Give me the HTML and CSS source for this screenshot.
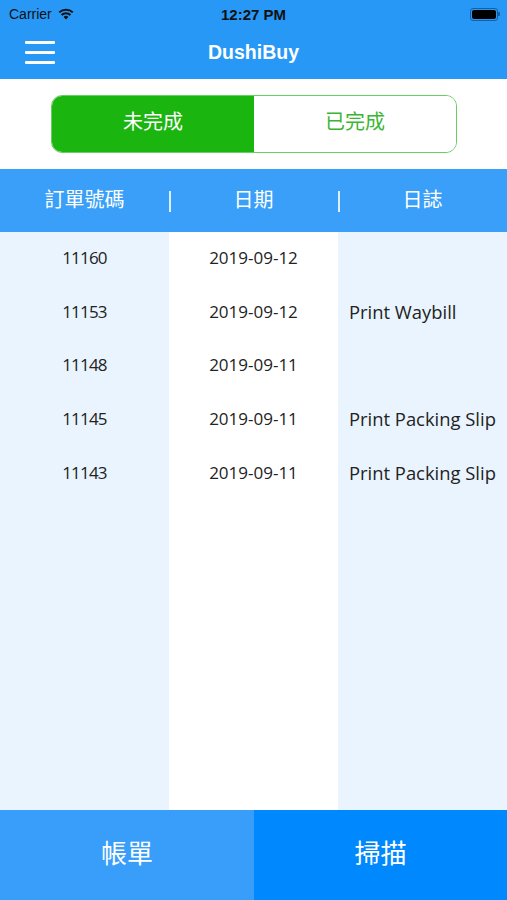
FILE: index.html
```html
<!DOCTYPE html>
<html lang="zh-Hant">
<head>
  <meta charset="UTF-8" />
  <meta name="viewport" content="width=device-width, initial-scale=1.0" />
  <title>DushiBuy</title>
  <link rel="stylesheet" href="styles.css">
</head>
<body>
  <div class="app">
    <div class="statusbar">
      <div class="carrier">Carrier
        <svg class="wifi" width="16" height="12" viewBox="0 0 16 12">
          <path d="M8 11.5 L5.6 8.9 A3.6 3.6 0 0 1 10.4 8.9 Z" fill="#111"/>
          <path d="M3.5 6.9 A6.6 6.6 0 0 1 12.5 6.9" stroke="#111" stroke-width="2" fill="none"/>
          <path d="M1.2 4.4 A9.8 9.8 0 0 1 14.8 4.4" stroke="#111" stroke-width="2" fill="none"/>
        </svg>
      </div>
      <div class="clock">12:27 PM</div>
      <div class="battery"><span></span></div>
    </div>

    <div class="navbar">
      <div class="menu"><i></i><i></i><i></i></div>
      <div class="title">DushiBuy</div>
    </div>

    <div class="segment-wrap">
      <div class="segment">
        <button class="active">未完成</button>
        <button>已完成</button>
      </div>
    </div>

    <div class="thead">
      <div>訂單號碼</div>
      <div>日期</div>
      <div>日誌</div>
    </div>

    <div class="tbody">
      <div class="col col-id">
        <div class="cell">11160</div>
        <div class="cell">11153</div>
        <div class="cell">11148</div>
        <div class="cell">11145</div>
        <div class="cell">11143</div>
      </div>
      <div class="col col-date">
        <div class="cell">2019-09-12</div>
        <div class="cell">2019-09-12</div>
        <div class="cell">2019-09-11</div>
        <div class="cell">2019-09-11</div>
        <div class="cell">2019-09-11</div>
      </div>
      <div class="col col-log">
        <div class="cell"></div>
        <div class="cell">Print Waybill</div>
        <div class="cell"></div>
        <div class="cell">Print Packing Slip</div>
        <div class="cell">Print Packing Slip</div>
      </div>
    </div>

    <div class="tabbar">
      <button class="bill">帳單</button>
      <button class="scan">掃描</button>
    </div>
  </div>
</body>
</html>
```

FILE: styles.css
```css
html, body {
  margin: 0;
  padding: 0;
}
body {
  font-family: "Noto Sans CJK TC", "Noto Sans", sans-serif;
  background: #fff;
}
.app {
  width: 507px;
  height: 900px;
  display: flex;
  flex-direction: column;
  overflow: hidden;
}
.statusbar {
  height: 28px;
  background: #2798f6;
  display: flex;
  align-items: center;
  justify-content: space-between;
  padding: 0 9px;
  font-family: "Liberation Sans", sans-serif;
  font-size: 14px;
  color: #111;
  position: relative;
}
.carrier {
  display: flex;
  align-items: center;
  gap: 6px;
}
.clock {
  position: absolute;
  left: 0;
  right: 0;
  text-align: center;
  font-weight: bold;
  font-size: 15px;
}
.battery {
  width: 24px;
  height: 9px;
  border: 1px solid #1a5f9c;
  border-radius: 3px;
  padding: 1px;
  position: relative;
}
.battery span {
  display: block;
  height: 100%;
  background: #000;
  border-radius: 2px;
}
.battery::after {
  content: "";
  position: absolute;
  right: -3px;
  top: 3px;
  width: 2px;
  height: 4px;
  background: #1a5f9c;
  border-radius: 0 1px 1px 0;
}
.navbar {
  height: 51px;
  background: #2798f6;
  display: flex;
  align-items: center;
  position: relative;
}
.menu {
  margin-left: 25px;
  display: flex;
  flex-direction: column;
  gap: 6.5px;
  margin-top: -2px;
}
.menu i {
  display: block;
  width: 30px;
  height: 3.5px;
  background: #fff;
  border-radius: 1px;
}
.title {
  position: absolute;
  left: 0;
  right: 0;
  top: 13px;
  text-align: center;
  color: #fff;
  font-family: "Liberation Sans", sans-serif;
  font-weight: bold;
  font-size: 19.5px;
}
.segment-wrap {
  height: 90px;
  display: flex;
  align-items: center;
  justify-content: center;
  background: #fff;
}
.segment {
  width: 404px;
  height: 56px;
  border: 1.5px solid #6bcc63;
  border-radius: 11px;
  display: flex;
  overflow: hidden;
  margin-left: 1px;
}
.segment button {
  flex: 1;
  border: none;
  background: #fff;
  color: #3cb534;
  font-family: inherit;
  font-size: 20px;
  padding: 0 0 7px;
}
.segment button.active {
  background: #1bb50f;
  color: #fff;
}
.thead {
  height: 63px;
  background: #399ff9;
  display: grid;
  grid-template-columns: 169px 169px 169px;
  align-items: center;
  color: #fff;
  font-size: 20px;
  padding-bottom: 4px;
  box-sizing: border-box;
}
.thead div {
  text-align: center;
  position: relative;
}
.thead div + div::before {
  content: "";
  position: absolute;
  left: 0;
  top: 7px;
  width: 1.5px;
  height: 21px;
  background: #dcefff;
}
.tbody {
  flex: 1;
  display: grid;
  grid-template-columns: 169px 169px 169px;
  font-family: "Open Sans", sans-serif;
  font-size: 17px;
  color: #222;
}
.col-id, .col-log {
  background: #e9f4fe;
}
.col-date {
  background: #fff;
}
.cell {
  height: 53.7px;
  display: flex;
  align-items: center;
  justify-content: center;
  padding-bottom: 3px;
  box-sizing: border-box;
}
.col-id .cell {
  letter-spacing: -0.8px;
}
.col-log .cell {
  justify-content: flex-start;
  padding-left: 11px;
  white-space: nowrap;
  font-size: 18.4px;
}
.tabbar {
  height: 90px;
  display: flex;
}
.tabbar button {
  border: none;
  color: #fff;
  font-family: inherit;
  font-size: 26px;
  padding: 0 0 8px;
}
.tabbar .bill {
  width: 254px;
  background: #399ef9;
}
.tabbar .scan {
  flex: 1;
  background: #0088fe;
}
```
